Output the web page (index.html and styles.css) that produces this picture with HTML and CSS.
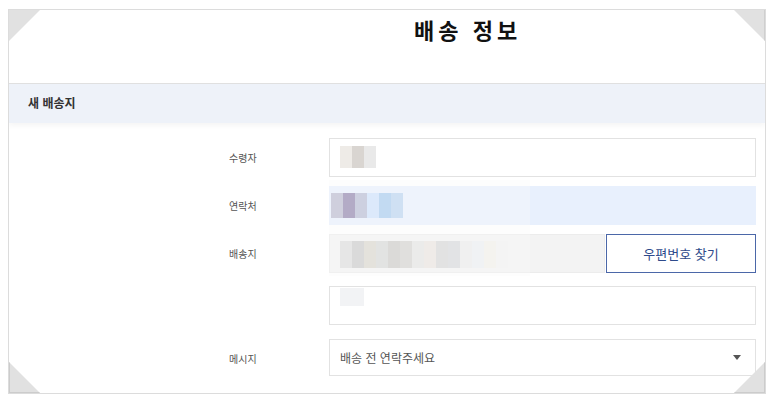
FILE: index.html
```html
<!DOCTYPE html>
<html lang="ko">
<head>
<meta charset="utf-8">
<link rel="stylesheet" href="styles.css">
</head>
<body>
<div class="frame">
  <span class="corner tl"></span>
  <span class="corner tr"></span>
  <span class="corner bl"></span>
  <span class="corner br"></span>
  <div class="title-area">
    <h1 class="title">배송 정보</h1>
  </div>
  <div class="section-head">새 배송지</div>
  <div class="form">
    <div class="smudge"></div>
    <div class="row">
      <div class="label">수령자</div>
      <div class="field input">
        <div class="blur b1">
          <i style="background:#eeebe7"></i><i style="background:#d9d5d1"></i><i style="background:#e9e9e9"></i>
        </div>
      </div>
    </div>
    <div class="row">
      <div class="label">연락처</div>
      <div class="field input autofill">
        <div class="blur b2">
          <i style="background:#cfcfdd"></i><i style="background:#b3abc6"></i><i style="background:#cdd0e0"></i><i style="background:#dce9fb"></i><i style="background:#c2daf2"></i><i style="background:#cfe0f3"></i>
        </div>
      </div>
    </div>
    <div class="row gap-md">
      <div class="label">배송지</div>
      <div class="field input readonly">
        <div class="blur b3">
          <i style="background:#e6e6e6"></i><i style="background:#dadada"></i><i style="background:#e4e2dc"></i><i style="background:#e2e3e2"></i><i style="background:#dbdad8"></i><i style="background:#e0dfdd"></i><i style="background:#ebebea"></i><i style="background:#efebe8"></i><i style="background:#e2e2e2"></i><i style="background:#e2e3e5"></i><i style="background:#f0f0f0"></i><i style="background:#f0f2f4"></i><i style="background:#f4f3ef"></i><i style="background:#f4f4f4"></i>
        </div>
      </div>
      <button class="zip">우편번호 찾기</button>
    </div>
    <div class="row gap-lg">
      <div class="label"></div>
      <div class="field input">
        <div class="blur b4"><i style="background:#f2f3f5"></i></div>
      </div>
    </div>
    <div class="row short">
      <div class="label">메시지</div>
      <div class="field select">
        <span class="sel-text">배송 전 연락주세요</span>
        <span class="arrow"></span>
      </div>
    </div>
  </div>
</div>
</body>
</html>
```
FILE: styles.css
```css
* { box-sizing: border-box; }
html, body { margin: 0; padding: 0; background: #fff; }
body {
  font-family: "Noto Sans CJK KR", "Noto Sans", sans-serif;
  color: #333;
}
.frame {
  position: relative;
  margin: 9px 0 0 8px;
  width: 758px;
  height: 385px;
  border: 1px solid #dcdcdc;
  overflow: hidden;
}
.corner {
  position: absolute;
  width: 33px;
  height: 33px;
  background: #e1e1e1;
  z-index: 3;
}
.corner.tl { left: -1px; top: -1px; clip-path: polygon(0 0, 100% 0, 0 100%); }
.corner.tr { right: -1px; top: -1px; clip-path: polygon(0 0, 100% 0, 100% 100%); border-right: 2px solid #cfcfcf; }
.corner.bl { left: -1px; bottom: -1px; clip-path: polygon(0 0, 100% 100%, 0 100%); border-left: 2px solid #cccccc; border-bottom: 2px solid #cccccc; }
.corner.br { right: -1px; bottom: -1px; clip-path: polygon(100% 0, 100% 100%, 0 100%); border-right: 2px solid #cccccc; border-bottom: 2px solid #cccccc; }

.title-area {
  height: 73px;
  padding: 3px 0 0 405px;
}
.title {
  margin: 0;
  font-size: 22px;
  line-height: 32px;
  font-weight: 700;
  letter-spacing: 4px;
  color: #111;
}
.section-head {
  height: 40px;
  border-top: 1px solid #e0e0e0;
  background: #eef2f9;
  padding-left: 19px;
  font-size: 12px;
  font-weight: 700;
  line-height: 38px;
  color: #333;
  box-shadow: 0 3px 5px rgba(0,0,0,0.04);
}
.form {
  position: relative;
  padding: 15px 9px 0 0;
}
.smudge {
  position: absolute;
  left: 320px;
  top: 57px;
  width: 201px;
  height: 96px;
  background: rgba(248, 248, 248, 0.35);
  z-index: 1;
}
.row {
  display: flex;
  align-items: stretch;
  height: 39px;
  margin-bottom: 9px;
}
.row.gap-md { margin-bottom: 13px; }
.row.gap-lg { margin-bottom: 14px; }
.row.short { height: 37px; }
.label {
  width: 320px;
  padding-left: 220px;
  font-size: 10px;
  line-height: 39px;
  color: #555;
}
.field {
  position: relative;
  flex: 1;
  border: 1px solid #e2e2e2;
  background: #fff;
}
.autofill { background: #e8f0fd; border-color: #e8f0fd; }
.readonly { background: #f3f3f3; border-color: #ececec; }
.blur {
  position: absolute;
  display: flex;
  z-index: 2;
}
.blur i { display: block; width: 12px; height: 100%; }
.b1 { left: 10px; top: 7px; height: 22px; }
.b2 { left: 1px; top: 6px; height: 25px; }
.b3 { left: 10px; top: 6px; height: 27px; }
.b4 { left: 10px; top: 1px; height: 18px; }
.b4 i { width: 24px; }
.zip {
  width: 150px;
  margin-left: 1px;
  border: 1px solid #4b67a8;
  background: #fff;
  color: #2e4a8b;
  font-family: inherit;
  font-size: 13px;
  padding: 0;
}
.select {
  display: flex;
  align-items: center;
  justify-content: space-between;
  padding: 0 14px 0 10px;
}
.sel-text { font-size: 12px; color: #555; }
.arrow {
  width: 0; height: 0;
  border-left: 4px solid transparent;
  border-right: 4px solid transparent;
  border-top: 5px solid #555;
}
```
